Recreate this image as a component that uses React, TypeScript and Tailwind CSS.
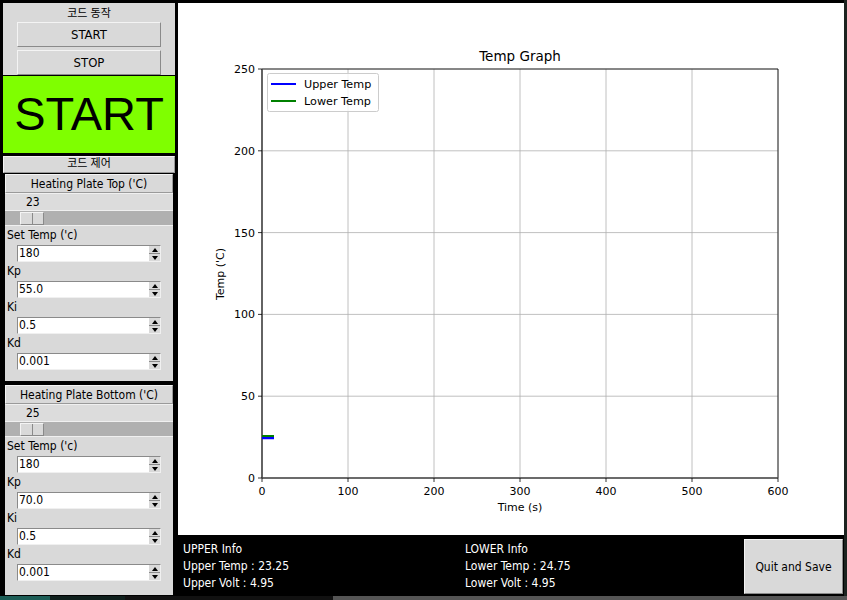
import React from "react";

const ui = { fontFamily: '"DejaVu Sans Condensed", "DejaVu Sans", "Noto Sans CJK KR", sans-serif', fontStretch: "condensed" } as React.CSSProperties;

function TkButton({ label }: { label: string }) {
  return (
    <div className="mx-[14px] h-[25px] flex items-center justify-center bg-[#d9d9d9] border border-t-[#f4f4f4] border-l-[#f4f4f4] border-r-[#8a8a8a] border-b-[#8a8a8a] text-[13px] text-black">
      {label}
    </div>
  );
}

function SpinBox({ value }: { value: string }) {
  return (
    <div className="ml-[12px] w-[144px] h-[17px] flex bg-white border border-t-[#8a8a8a] border-l-[#8a8a8a] border-r-[#f0f0f0] border-b-[#f0f0f0]">
      <div className="flex-1 text-[12px] leading-[15px] pl-[1px] text-black">{value}</div>
      <div className="w-[11px] flex flex-col bg-[#d9d9d9]">
        <div className="flex-1 flex items-center justify-center border-b border-[#8a8a8a]">
          <div className="w-0 h-0 border-l-[3px] border-r-[3px] border-b-[4px] border-l-transparent border-r-transparent border-b-black" />
        </div>
        <div className="flex-1 flex items-center justify-center">
          <div className="w-0 h-0 border-l-[3px] border-r-[3px] border-t-[4px] border-l-transparent border-r-transparent border-t-black" />
        </div>
      </div>
    </div>
  );
}

function Field({ label, value }: { label: string; value: string }) {
  return (
    <div>
      <div className="h-[19px] pl-[2px] text-[12px] leading-[19px] text-black">{label}</div>
      <SpinBox value={value} />
    </div>
  );
}

function PlateGroup({ title, temp, vals, h }: { title: string; temp: string; vals: string[]; h: string }) {
  return (
    <div className={`mx-[2px] bg-[#d9d9d9] ${h}`}>
      <div className="h-[19px] flex items-center justify-center text-[12px] text-black border border-t-[#f4f4f4] border-l-[#f4f4f4] border-r-[#9a9a9a] border-b-[#9a9a9a]">
        {title}
      </div>
      <div className="h-[17px] pl-[21px] text-[12px] leading-[17px] text-black bg-[#dcdcdc] border-t border-[#f0f0f0]">{temp}</div>
      <div className="h-[16px] bg-[#b0b0b0] border-t border-b border-[#f0f0f0] flex items-center pl-[15px]">
        <div className="w-[24px] h-[13px] flex bg-[#d9d9d9] border border-t-[#f4f4f4] border-l-[#f4f4f4] border-r-[#8a8a8a] border-b-[#8a8a8a]">
          <div className="flex-1 border-r border-[#8a8a8a]" />
          <div className="flex-1" />
        </div>
      </div>
      <Field label="Set Temp ('c)" value={vals[0]} />
      <Field label="Kp" value={vals[1]} />
      <Field label="Ki" value={vals[2]} />
      <Field label="Kd" value={vals[3]} />
    </div>
  );
}

function Graph() {
  const mpl = { fontFamily: '"DejaVu Sans", sans-serif', fontStretch: "normal" } as React.CSSProperties;
  const xs = [0, 100, 200, 300, 400, 500, 600];
  const ys = [0, 50, 100, 150, 200, 250];
  const L = 262, R = 778, T = 69, B = 478;
  const px = (v: number) => L + (v / 600) * (R - L);
  const py = (v: number) => B - (v / 250) * (B - T);
  return (
    <svg width="666" height="532" viewBox="178 3 666 532" style={mpl}>
      <rect x="178" y="3" width="666" height="532" fill="#ffffff" />
      {xs.map((v) => (
        <line key={"gx" + v} x1={px(v)} y1={T} x2={px(v)} y2={B} stroke="#b0b0b0" strokeWidth="0.8" />
      ))}
      {ys.map((v) => (
        <line key={"gy" + v} x1={L} y1={py(v)} x2={R} y2={py(v)} stroke="#b0b0b0" strokeWidth="0.8" />
      ))}
      <line x1={L} y1={T} x2={R} y2={T} stroke="#000" strokeWidth="0.8" />
      <line x1={R} y1={T} x2={R} y2={B} stroke="#000" strokeWidth="0.8" />
      <line x1={L} y1={T} x2={L} y2={B} stroke="#444" strokeWidth="1.6" />
      <line x1={L} y1={B} x2={R} y2={B} stroke="#444" strokeWidth="1.6" />
      {xs.map((v) => (
        <g key={"tx" + v}>
          <line x1={px(v)} y1={B} x2={px(v)} y2={B + 4} stroke="#000" strokeWidth="0.8" />
          <text x={px(v)} y={B + 17} fontSize="11" textAnchor="middle" fill="#000">{v}</text>
        </g>
      ))}
      {ys.map((v) => (
        <g key={"ty" + v}>
          <line x1={L - 4} y1={py(v)} x2={L} y2={py(v)} stroke="#000" strokeWidth="0.8" />
          <text x={L - 7} y={py(v) + 4} fontSize="11" textAnchor="end" fill="#000">{v}</text>
        </g>
      ))}
      <text x={(L + R) / 2} y={61} fontSize="13.5" textAnchor="middle" fill="#000">Temp Graph</text>
      <text x={(L + R) / 2} y={511} fontSize="11" textAnchor="middle" fill="#000">Time (s)</text>
      <text x={224} y={274} fontSize="11" textAnchor="middle" fill="#000" transform="rotate(-90 224 274)">Temp ('C)</text>
      <line x1={L} y1={438} x2={274} y2={438} stroke="#0000ff" strokeWidth="2.5" />
      <line x1={L} y1={436} x2={274} y2={436} stroke="#008000" strokeWidth="2" />
      <rect x="267.5" y="73.5" width="111" height="38" rx="2" fill="#ffffff" fillOpacity="0.8" stroke="#cccccc" />
      <line x1="271" y1="84" x2="296" y2="84" stroke="#0000ff" strokeWidth="2" />
      <text x="304" y="88" fontSize="11.2" fill="#000">Upper Temp</text>
      <line x1="271" y1="101" x2="296" y2="101" stroke="#008000" strokeWidth="2" />
      <text x="304" y="105" fontSize="11.2" fill="#000">Lower Temp</text>
    </svg>
  );
}

export default function App() {
  return (
    <div className="w-[847px] h-[600px] bg-black flex flex-col overflow-hidden" style={ui}>
      <div className="flex h-[596px]">
        {/* 왼쪽 패널 */}
        <div className="w-[177px] pt-[3px] pl-[3px] pr-[2px] flex flex-col">
          <div className="bg-[#d9d9d9]">
            <div className="h-[19px] pt-[4px] flex items-center justify-center text-[11px] text-black">코드 동작</div>
            <TkButton label="START" />
            <div className="h-[3px]" />
            <TkButton label="STOP" />
          </div>
          <div className="h-[77px] mt-[1px] bg-[#7fff00] flex items-center justify-center text-[47px] text-black" style={{ fontFamily: '"Liberation Sans", Arial, sans-serif', fontStretch: "normal" }}>
            START
          </div>
          <div className="h-[3px]" />
          <div className="h-[17px] flex items-center justify-center text-[11px] text-black bg-[#d9d9d9] border border-t-[#f4f4f4] border-l-[#f4f4f4] border-r-[#9a9a9a] border-b-[#9a9a9a]">
            코드 제어
          </div>
          <div className="h-[1px]" />
          <PlateGroup title="Heating Plate Top ('C)" temp="23" vals={["180", "55.0", "0.5", "0.001"]} h="h-[207px]" />
          <div className="h-[4px]" />
          <PlateGroup title="Heating Plate Bottom ('C)" temp="25" vals={["180", "70.0", "0.5", "0.001"]} h="h-[210px]" />
        </div>

        {/* 그래프 + 정보 */}
        <div className="w-[667px] pt-[3px] flex flex-col">
          <div className="ml-[1px] w-[666px] h-[532px] bg-white">
            <Graph />
          </div>
          <div className="flex-1 flex text-white text-[12px]">
            <div className="w-[288px] pl-[6px] pt-[6px] leading-[17px]">
              <div>UPPER Info</div>
              <div>Upper Temp : 23.25</div>
              <div>Upper Volt : 4.95</div>
            </div>
            <div className="w-[279px] pt-[6px] leading-[17px]">
              <div>LOWER Info</div>
              <div>Lower Temp : 24.75</div>
              <div>Lower Volt : 4.95</div>
            </div>
            <div className="mt-[4px] w-[99px] h-[55px] flex items-center justify-center bg-[#d9d9d9] text-black border border-t-[#f4f4f4] border-l-[#f4f4f4] border-r-[#8a8a8a] border-b-[#8a8a8a]">
              Quit and Save
            </div>
          </div>
        </div>
        <div className="flex-1 bg-[#1c2420]" />
      </div>
      <div className="flex-1 flex">
        <div className="w-[50px] bg-[#1d5e57]" />
        <div className="w-[75px] bg-[#0f1f1c]" />
        <div className="w-[208px] bg-[#111]" />
        <div className="flex-1 bg-[#555]" />
      </div>
    </div>
  );
}
